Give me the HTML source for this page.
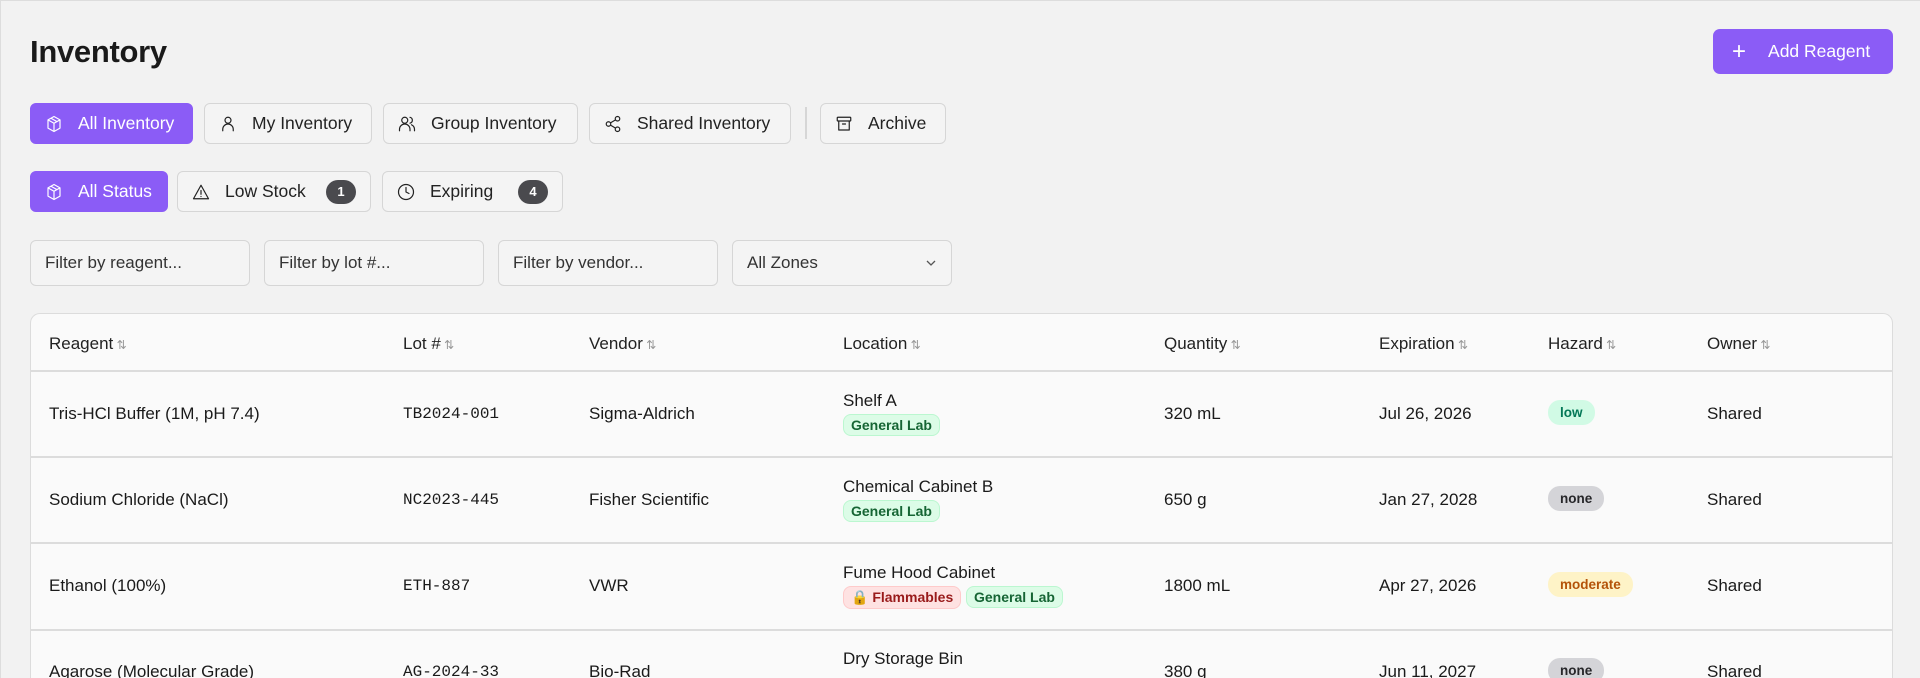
<!DOCTYPE html>
<html style="width:1920px;height:678px;overflow:hidden"><head><meta charset="utf-8"><style>
*{box-sizing:border-box;margin:0;padding:0}
body{width:1920px;height:678px;overflow:hidden;background:#f2f2f2;font-family:"Liberation Sans",sans-serif;color:#1a1a1a;position:relative;border-left:1px solid #ddd;border-top:1px solid #ddd}
.abs{position:absolute}
h1{position:absolute;left:29px;top:33px;font-size:31px;font-weight:700;letter-spacing:-0.3px}
.btn{position:absolute;display:flex;align-items:center;border:1.5px solid #d6d6d6;border-radius:6px;background:#f4f4f4;font-size:17.5px;color:#222;height:41px;padding-left:14px}
.btn svg{width:18px;height:18px;margin-right:15px;fill:none;stroke:currentColor;stroke-width:1.6;stroke-linecap:round;stroke-linejoin:round}
.btn.on{background:#8b5cf6;border-color:#8b5cf6;color:#fff}
.cnt{display:inline-flex;align-items:center;justify-content:center;background:#4a4a4e;color:#fff;border-radius:12px;font-size:13px;font-weight:700;width:30px;height:24px;margin-left:auto;margin-right:14px}
.inp{position:absolute;top:239px;height:46px;width:220px;border:1.5px solid #d6d6d6;border-radius:6px;background:#f4f4f4;font-size:17px;color:#333;padding:12px 14px}
.card{position:absolute;left:29px;top:312px;width:1863px;height:366px;background:#fafafa;border:1.5px solid #dcdcdc;border-bottom:none;border-radius:10px 10px 0 0;overflow:hidden}
.hl{position:absolute;left:0;right:0;height:1.5px;background:#dcdcdc}
.t{position:absolute;font-size:17px;white-space:nowrap}
.th{font-size:17px;color:#222}
.th::after{content:" ⇅";color:#999;font-size:12px}
.mono{font-family:"Liberation Mono",monospace;font-size:16px}
.b{font-weight:500}
.tag{display:inline-block;font-size:14px;font-weight:700;border-radius:8px;padding:2px 7px;border:1px solid}
.g{background:#dcfce7;color:#166534;border-color:#bbf7d0}
.r{background:#fee2e2;color:#991b1b;border-color:#fecaca}
.pill{position:absolute;font-size:13.5px;font-weight:700;border-radius:12px;padding:5px 12px}
</style></head><body>
<h1>Inventory</h1>
<div class="abs" style="left:1712px;top:28px;width:180px;height:45px;background:#8b5cf6;border-radius:7px;color:#fff;font-size:17.5px;display:flex;align-items:center"><span style="font-size:24px;margin-left:19px;font-weight:300">+</span><span style="margin-left:22px">Add Reagent</span></div>

<div class="btn on" style="left:29px;top:102px;width:163px"><svg viewBox="0 0 24 24"><path d="M12 2l8 4.5v11L12 22l-8-4.5v-11z M4 6.5l8 4.5 8-4.5 M12 11v11 M8 4.3l8 4.5"/></svg>All Inventory</div>
<div class="btn" style="left:203px;top:102px;width:168px"><svg viewBox="0 0 24 24"><circle cx="12" cy="7" r="4"/><path d="M5 21v-2a7 7 0 0 1 14 0v2"/></svg>My Inventory</div>
<div class="btn" style="left:382px;top:102px;width:195px"><svg viewBox="0 0 24 24"><circle cx="9" cy="7" r="4"/><path d="M2 21v-2a7 7 0 0 1 14 0v2 M16 3.1a4 4 0 0 1 0 7.8 M22 21v-2a7 7 0 0 0-4-6"/></svg>Group Inventory</div>
<div class="btn" style="left:588px;top:102px;width:202px"><svg viewBox="0 0 24 24"><circle cx="18" cy="5" r="3"/><circle cx="6" cy="12" r="3"/><circle cx="18" cy="19" r="3"/><path d="M8.6 13.5l6.8 4 M15.4 6.5l-6.8 4"/></svg>Shared Inventory</div>
<div class="abs" style="left:804px;top:106px;width:1.5px;height:32px;background:#d6d6d6"></div>
<div class="btn" style="left:819px;top:102px;width:126px"><svg viewBox="0 0 24 24"><rect x="3" y="3" width="18" height="5" rx="1"/><path d="M5 8v12h14V8 M10 12h4"/></svg>Archive</div>

<div class="btn on" style="left:29px;top:170px;width:138px"><svg viewBox="0 0 24 24"><path d="M12 2l8 4.5v11L12 22l-8-4.5v-11z M4 6.5l8 4.5 8-4.5 M12 11v11 M8 4.3l8 4.5"/></svg>All Status</div>
<div class="btn" style="left:176px;top:170px;width:194px"><svg viewBox="0 0 24 24"><path d="M12 3L2 21h20z M12 10v5 M12 18v.01"/></svg>Low Stock<span class="cnt">1</span></div>
<div class="btn" style="left:381px;top:170px;width:181px"><svg viewBox="0 0 24 24"><circle cx="12" cy="12" r="10"/><path d="M12 6v6l4 2"/></svg>Expiring<span class="cnt">4</span></div>

<div class="inp" style="left:29px">Filter by reagent...</div>
<div class="inp" style="left:263px">Filter by lot #...</div>
<div class="inp" style="left:497px">Filter by vendor...</div>
<div class="inp" style="left:731px">All Zones<svg style="position:absolute;right:14px;top:16px" width="12" height="12" viewBox="0 0 12 12" fill="none" stroke="#555" stroke-width="1.3"><path d="M2 4l4 4 4-4"/></svg></div>

<div class="card">
<div class="t th" style="left:18px;top:20px">Reagent</div>
<div class="t th" style="left:372px;top:20px">Lot #</div>
<div class="t th" style="left:558px;top:20px">Vendor</div>
<div class="t th" style="left:812px;top:20px">Location</div>
<div class="t th" style="left:1133px;top:20px">Quantity</div>
<div class="t th" style="left:1348px;top:20px">Expiration</div>
<div class="t th" style="left:1517px;top:20px">Hazard</div>
<div class="t th" style="left:1676px;top:20px">Owner</div>
<div class="hl" style="top:56px"></div>

<div class="t b" style="left:18px;top:90px">Tris-HCl Buffer (1M, pH 7.4)</div>
<div class="t mono" style="left:372px;top:91px">TB2024-001</div>
<div class="t" style="left:558px;top:90px">Sigma-Aldrich</div>
<div class="t" style="left:812px;top:77px">Shelf A</div>
<div class="t" style="left:812px;top:100px"><span class="tag g">General Lab</span></div>
<div class="t" style="left:1133px;top:90px">320 mL</div>
<div class="t" style="left:1348px;top:90px">Jul 26, 2026</div>
<div class="pill" style="left:1517px;top:86px;background:#d1fae5;color:#047857">low</div>
<div class="t" style="left:1676px;top:90px">Shared</div>
<div class="hl" style="top:142px"></div>

<div class="t b" style="left:18px;top:176px">Sodium Chloride (NaCl)</div>
<div class="t mono" style="left:372px;top:177px">NC2023-445</div>
<div class="t" style="left:558px;top:176px">Fisher Scientific</div>
<div class="t" style="left:812px;top:163px">Chemical Cabinet B</div>
<div class="t" style="left:812px;top:186px"><span class="tag g">General Lab</span></div>
<div class="t" style="left:1133px;top:176px">650 g</div>
<div class="t" style="left:1348px;top:176px">Jan 27, 2028</div>
<div class="pill" style="left:1517px;top:172px;background:#d4d4d8;color:#27272a">none</div>
<div class="t" style="left:1676px;top:176px">Shared</div>
<div class="hl" style="top:228px"></div>

<div class="t b" style="left:18px;top:262px">Ethanol (100%)</div>
<div class="t mono" style="left:372px;top:263px">ETH-887</div>
<div class="t" style="left:558px;top:262px">VWR</div>
<div class="t" style="left:812px;top:249px">Fume Hood Cabinet</div>
<div class="t" style="left:812px;top:272px"><span class="tag r">🔒 Flammables</span> <span class="tag g">General Lab</span></div>
<div class="t" style="left:1133px;top:262px">1800 mL</div>
<div class="t" style="left:1348px;top:262px">Apr 27, 2026</div>
<div class="pill" style="left:1517px;top:258px;background:#fef3c7;color:#b45309">moderate</div>
<div class="t" style="left:1676px;top:262px">Shared</div>
<div class="hl" style="top:315px"></div>

<div class="t b" style="left:18px;top:348px">Agarose (Molecular Grade)</div>
<div class="t mono" style="left:372px;top:349px">AG-2024-33</div>
<div class="t" style="left:558px;top:348px">Bio-Rad</div>
<div class="t" style="left:812px;top:335px">Dry Storage Bin</div>
<div class="t" style="left:1133px;top:348px">380 g</div>
<div class="t" style="left:1348px;top:348px">Jun 11, 2027</div>
<div class="pill" style="left:1517px;top:344px;background:#d4d4d8;color:#27272a">none</div>
<div class="t" style="left:1676px;top:348px">Shared</div>
</div>
</body></html>
